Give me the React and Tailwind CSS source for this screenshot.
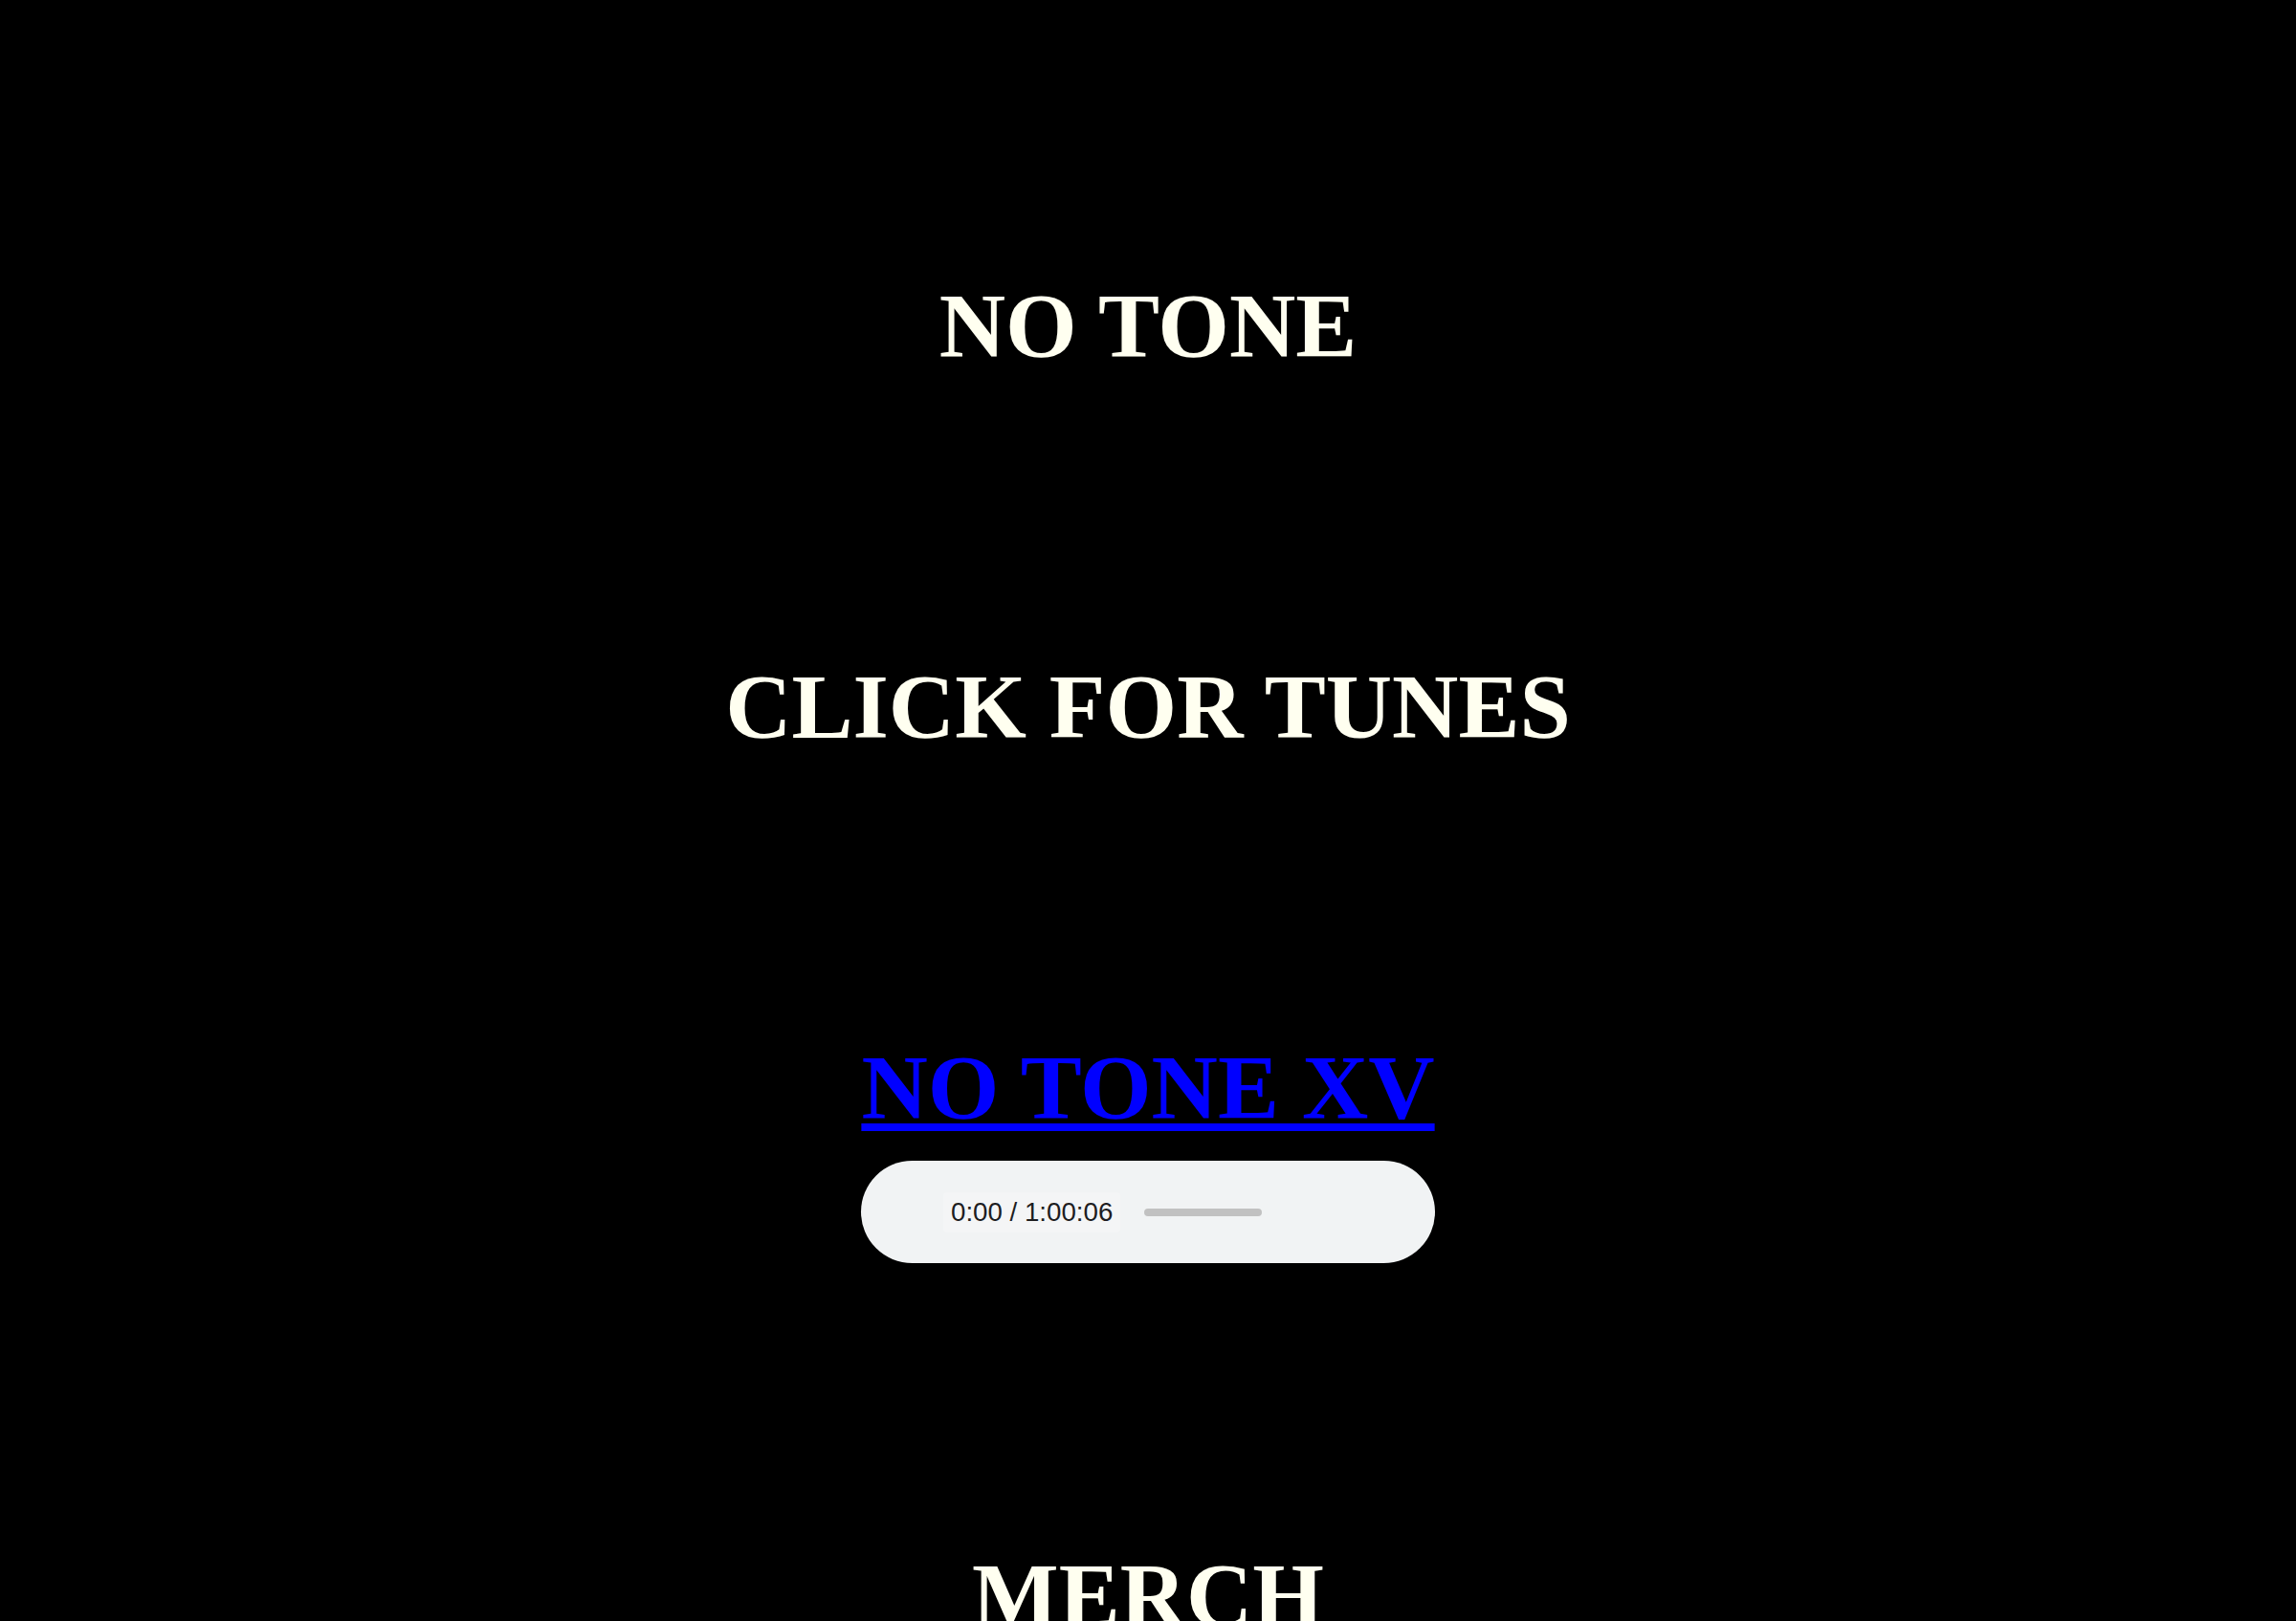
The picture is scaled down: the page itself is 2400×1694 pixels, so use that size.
export default function App() {
  return (
    <div
      className="min-h-screen w-full bg-black flex flex-col items-center text-center pt-[288px] pb-[200px]"
      style={{ fontFamily: '"Liberation Serif", "Times New Roman", serif' }}
    >
      <h1 className="text-[96px] leading-[106px] font-bold text-[#fffff0] m-0">NO TONE</h1>
      <h1 className="text-[96px] leading-[106px] font-bold text-[#fffff0] mt-[292px]">CLICK FOR TUNES</h1>
      <div className="mt-[292px] flex flex-col items-center">
        <h1 className="text-[96px] leading-[106px] font-bold m-0">
          <a
            href="#"
            className="text-[#0000ff] underline decoration-8 underline-offset-[5px]"
            style={{ textDecorationSkipInk: 'none' }}
          >
            NO TONE XV
          </a>
        </h1>
        <div
          className="mt-[23px] w-[600px] h-[107px] rounded-full bg-[#f1f3f4] flex items-center pl-[86px]"
          style={{ fontFamily: '"Liberation Sans", Arial, sans-serif' }}
        >
          <span className="text-[27.7px] leading-[42px] px-[8px] text-[#1d1d1f] bg-[#f4f5f6] rounded-[4px]">
            0:00 / 1:00:06
          </span>
          <div className="ml-[25px] w-[123px] h-[8px] rounded-full bg-[#c1c1c1]" />
        </div>
      </div>
      <h1 className="text-[96px] leading-[106px] font-bold text-[#fffff0] mt-[295px]">MERCH</h1>
    </div>
  );
}
